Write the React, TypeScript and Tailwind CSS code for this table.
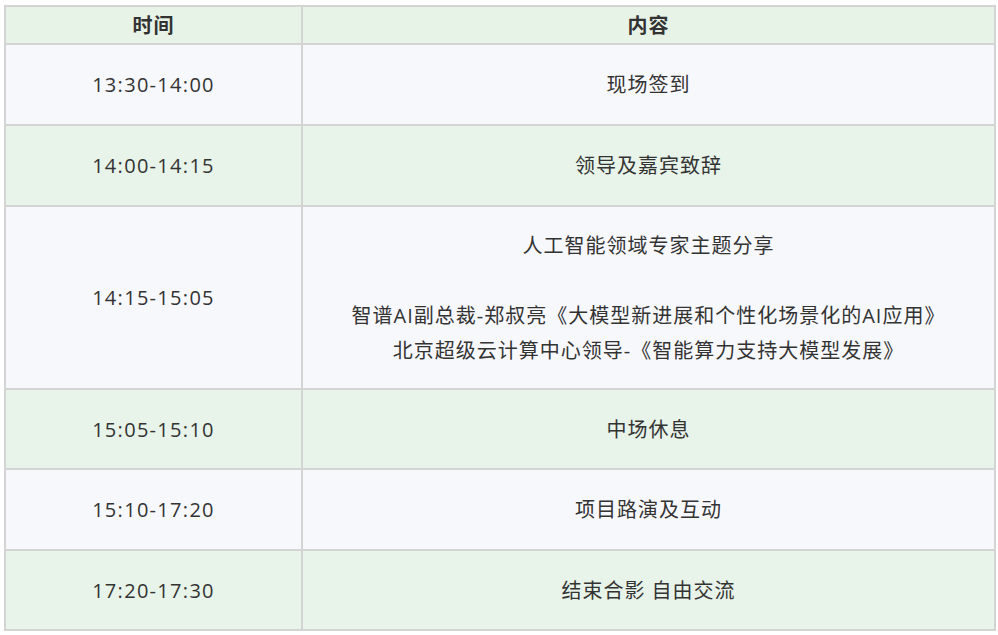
const rows = [
  { time: "13:30-14:00", lines: ["现场签到"], tone: "blue", h: "h-[81px]" },
  { time: "14:00-14:15", lines: ["领导及嘉宾致辞"], tone: "green", h: "h-[81px]" },
  {
    time: "14:15-15:05",
    lines: [
      "人工智能领域专家主题分享",
      "",
      "智谱AI副总裁-郑叔亮《大模型新进展和个性化场景化的AI应用》",
      "北京超级云计算中心领导-《智能算力支持大模型发展》",
    ],
    tone: "blue",
    h: "h-[183px]",
  },
  { time: "15:05-15:10", lines: ["中场休息"], tone: "green", h: "h-[80px]" },
  { time: "15:10-17:20", lines: ["项目路演及互动"], tone: "blue", h: "h-[81px]" },
  { time: "17:20-17:30", lines: ["结束合影 自由交流"], tone: "green", h: "h-[80px]" },
];

export default function App() {
  return (
    <div
      className="min-h-screen bg-white pt-[5px] pl-[4px] text-[#333] text-[20px] leading-[35px] tracking-[1px]"
      style={{ fontFamily: '"Open Sans", "Noto Sans CJK SC", sans-serif' }}
    >
      <div className="w-[992px] grid grid-cols-[297px_1fr] border-l-2 border-t-2 border-[#d4d4d4]">
        {/* 表头 */}
        <div className="h-[38px] flex items-center justify-center font-bold bg-[#e8f3e8] border-r-2 border-b-2 border-[#d4d4d4]">
          时间
        </div>
        <div className="h-[38px] flex items-center justify-center font-bold bg-[#e8f3e8] border-r-2 border-b-2 border-[#d4d4d4]">
          内容
        </div>

        {rows.map((row) => {
          const bg = row.tone === "green" ? "bg-[#e8f4e9]" : "bg-[#f7f8fc]";
          return (
            <Row
              key={row.time}
              time={row.time}
              lines={row.lines}
              bg={`${bg} ${row.h}`}
            />
          );
        })}
      </div>
    </div>
  );
}

function Row({ time, lines, bg }: { time: string; lines: string[]; bg: string }) {
  return (
    <>
      <div
        className={`flex items-center justify-center tracking-[1.3px] border-r-2 border-b-2 border-[#d4d4d4] ${bg}`}
      >
        {time}
      </div>
      <div
        className={`flex flex-col items-center justify-center text-center border-r-2 border-b-2 border-[#d4d4d4] ${bg}`}
      >
        {lines.map((line, i) => (
          <p key={i} className="h-[35px]">
            {line}
          </p>
        ))}
      </div>
    </>
  );
}
